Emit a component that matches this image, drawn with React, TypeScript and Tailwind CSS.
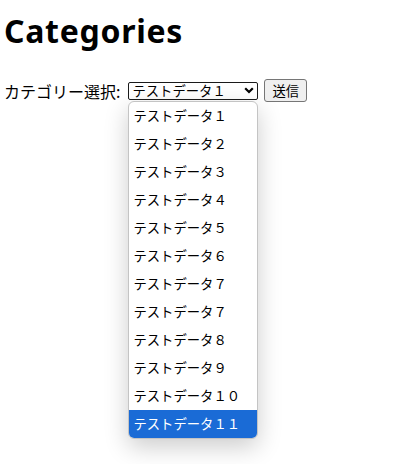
import React from "react";

const items = [
  "テストデータ１",
  "テストデータ２",
  "テストデータ３",
  "テストデータ４",
  "テストデータ５",
  "テストデータ６",
  "テストデータ７",
  "テストデータ７",
  "テストデータ８",
  "テストデータ９",
  "テストデータ１０",
  "テストデータ１１",
];

export default function App() {
  const jp = { fontFamily: '"Noto Sans CJK JP", sans-serif' } as React.CSSProperties;
  return (
    <div className="w-[395px] h-[464px] bg-white text-black overflow-hidden pl-[4px]">
      <h1
        className="text-[32px] font-bold leading-[37px] pt-[12px] tracking-[0.7px]"
        style={{ fontFamily: '"Noto Sans", sans-serif' }}
      >
        Categories
      </h1>
      <div className="mt-[30px] flex items-center h-[23px]" style={jp}>
        <span className="text-[16px] leading-[20px]">カテゴリー選択:</span>
        <div className="relative ml-[8px] w-[130px]">
          <div className="h-[18px] border border-[#1a1a1a] rounded-[2px] flex items-center justify-between pl-[3px] pr-[3px] text-[13.33px] leading-[16px]">
            <span>テストデータ１</span>
            <svg width="10" height="7" viewBox="0 0 10 7">
              <path d="M1.2 1.2 L5 5 L8.8 1.2" fill="none" stroke="#000" strokeWidth="2.2" />
            </svg>
          </div>
          <div className="absolute left-0 top-[19px] w-[130px] bg-white border border-[#c4c4c4] rounded-[6px] overflow-hidden shadow-[0_8px_24px_rgba(0,0,0,0.2)] z-10">
            {items.map((t, i) => (
              <div
                key={i}
                className={
                  "h-[28px] flex items-center pl-[4px] text-[13.33px] " +
                  (i === items.length - 1 ? "bg-[#1a6bd6] text-white" : "")
                }
              >
                {t}
              </div>
            ))}
          </div>
        </div>
        <button className="ml-[6px] h-[23px] px-[7px] border border-[#767676] rounded-[3px] bg-[#efefef] text-[13.33px] leading-[16px]" style={jp}>
          送信
        </button>
      </div>
    </div>
  );
}
